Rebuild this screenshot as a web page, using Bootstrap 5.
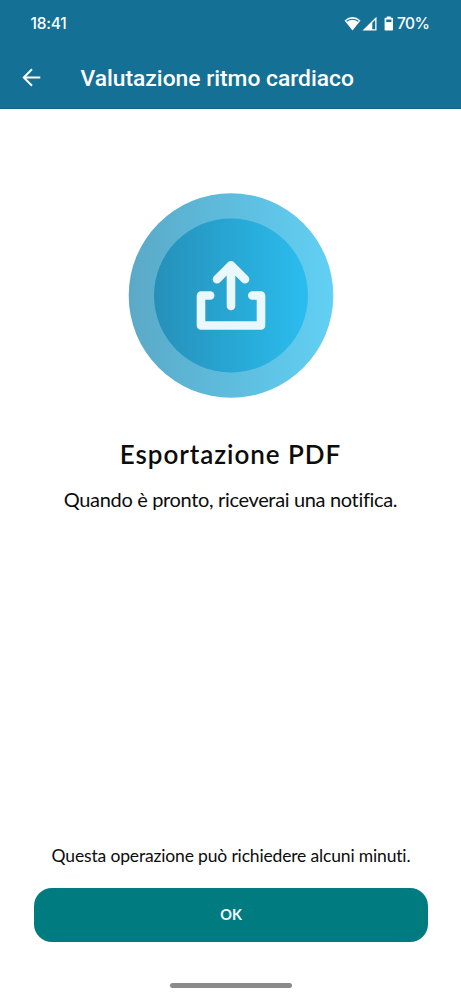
<!DOCTYPE html>
<html lang="it">
<head>
<meta charset="utf-8">
<meta name="viewport" content="width=device-width, initial-scale=1">
<title>Valutazione ritmo cardiaco</title>
<link href="https://cdn.jsdelivr.net/npm/bootstrap@5.3.0/dist/css/bootstrap.min.css" rel="stylesheet">
<style>
body { font-family: Lato, "Open Sans", sans-serif; color: #0c0c0c; background: #fff; }
.screen { height: 999px; }
.app-header { background: #157096; height: 109px; border-bottom: 1px solid #0f6787; }
.status-bar { height: 47px; padding: 0 31.5px 0 30.5px; }
.clock { font: 500 15.5px/47px Inter, sans-serif; letter-spacing: -.2px; }
.battery-level { font: 500 15.5px/47px Inter, sans-serif; letter-spacing: -.5px; margin-left: 3px; }
.app-bar { height: 62px; padding-left: 20px; }
.app-title { font: 500 22.8px/30px Roboto, sans-serif; margin-left: 36.5px; padding-top: 2px; }
.hero-art { margin-top: 83px; }
.headline { font-size: 26px; font-weight: 600; line-height: 32px; margin-top: 40px; letter-spacing: .95px; }
.subline { font-size: 20px; line-height: 26px; margin-top: 16px; letter-spacing: -.34px; }
.hint { font-size: 17.5px; line-height: 24px; margin-bottom: 20px; letter-spacing: -.16px; }
.btn-confirm { --bs-btn-bg: #007b80; --bs-btn-color: #f1fbfb; --bs-btn-border-width: 0; --bs-btn-hover-bg: #006b70; --bs-btn-hover-color: #fff; --bs-btn-border-radius: 18px; --bs-btn-font-weight: 700; --bs-btn-font-size: 14.5px; --bs-btn-padding-y: 0; height: 54px; letter-spacing: -.2px; }
.footer-area { padding: 0 33px 0 34px; }
.home-bar { width: 122px; height: 5px; background: #8a8a8a; margin-top: 41px; margin-bottom: 11px; }
</style>
<script src="https://cdn.jsdelivr.net/npm/bootstrap@5.3.0/dist/js/bootstrap.bundle.min.js"></script>
</head>
<body>
<div class="screen d-flex flex-column overflow-hidden">
  <header class="app-header text-white flex-shrink-0">
    <div class="status-bar d-flex align-items-center justify-content-between">
      <span class="clock">18:41</span>
      <div class="d-flex align-items-center">
        <svg width="50" height="16" viewBox="0 0 50 16" fill="#fff" aria-hidden="true">
          <path d="M.5 4.400Q8.500-2.400 16.500 4.400L8.500 14.500Z"/>
          <path d="M2.600 5.300Q8.500 1.200 14.400 5.300" fill="none" stroke="#157096" stroke-width="1.200"/>
          <path d="M18.500 14.500L32.500 .8V14.500Z"/>
          <path d="M28.300 6.800L31.200 4V13.200H28.300Z" fill="#157096"/>
          <path d="M42.800 .5h4v1.200h1.500q.7 0 .7.700v11.400q0 .7-.7.700h-7q-.7 0-.7-.7V2.400q0-.7.700-.7h1.500Z"/>
          <path d="M42.200 3.500h5.200v2.600h-5.200Z" fill="#157096"/>
        </svg>
        <span class="battery-level">70%</span>
      </div>
    </div>
    <div class="app-bar d-flex align-items-center">
      <svg width="24" height="24" viewBox="0 0 24 24" fill="none" stroke="#fff" stroke-width="2" role="img" aria-label="Indietro"><path d="M20.300 11.500H4M12 3.300L3.800 11.500l8.200 8.200"/></svg>
      <h1 class="app-title mb-0 text-nowrap">Valutazione ritmo cardiaco</h1>
    </div>
  </header>
  <main class="flex-grow-1 d-flex flex-column align-items-center text-center">
    <svg class="hero-art flex-shrink-0" width="206" height="206" viewBox="0 0 206 206" aria-hidden="true">
      <defs>
        <linearGradient id="outer"><stop offset="0" stop-color="#5ba9c7"/><stop offset="1" stop-color="#61d0f4"/></linearGradient>
        <linearGradient id="inner"><stop offset="0" stop-color="#2590b8"/><stop offset="1" stop-color="#2bbdef"/></linearGradient>
      </defs>
      <circle cx="103" cy="103.500" r="102.300" fill="url(#outer)"/>
      <circle cx="103" cy="103.500" r="77" fill="url(#inner)"/>
      <g fill="none" stroke="#eaf8fd" stroke-width="8.600" stroke-linecap="round" stroke-linejoin="round">
        <path d="M103 114V73.800M89 87.300L103 73.300l14 14"/>
        <path d="M82.200 103.500H73V133.500H133V103.500H124.300"/>
      </g>
    </svg>
    <h2 class="headline mb-0 text-nowrap">Esportazione PDF</h2>
    <p class="subline mb-0 text-nowrap">Quando è pronto, riceverai una notifica.</p>
  </main>
  <footer class="footer-area d-flex flex-column align-items-center">
    <p class="hint text-nowrap">Questa operazione può richiedere alcuni minuti.</p>
    <button type="button" class="btn btn-confirm w-100">OK</button>
    <div class="home-bar rounded-pill"></div>
  </footer>
</div>
</body>
</html>
